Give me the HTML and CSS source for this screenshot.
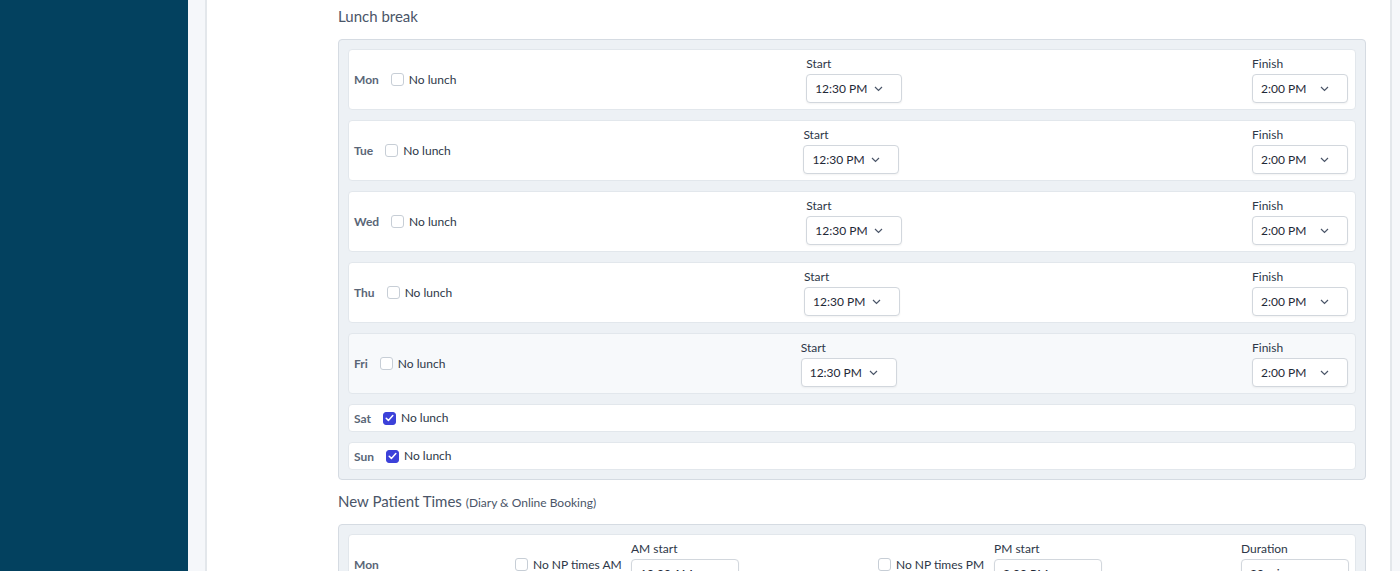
FILE: index.html
```html
<!DOCTYPE html>
<html lang="en">
<head>
    <meta charset="UTF-8">
    <meta name="viewport" content="width=device-width, initial-scale=1.0">
    <title>Practice hours</title>
    <link rel="stylesheet" href="styles.css">
</head>
<body>
    <div class="sidebar"></div>
    <div class="main">
        <div class="card">
            <h3 class="section-title">Lunch break</h3>
            <div class="panel">
                <div class="row">
                    <div class="day">
                        <span class="day-name">Mon</span>
                        <label class="check"><span class="box"></span>No lunch</label>
                    </div>
                    <div class="field">
                        <div class="field-label">Start</div>
                        <div class="select">12:30 PM<svg width="9" height="6" viewBox="0 0 9 6"><path d="M1 1l3.5 3.5L8 1" fill="none" stroke="#4a5568" stroke-width="1.2"/></svg></div>
                    </div>
                    <div class="field">
                        <div class="field-label">Finish</div>
                        <div class="select">2:00 PM<svg width="9" height="6" viewBox="0 0 9 6"><path d="M1 1l3.5 3.5L8 1" fill="none" stroke="#4a5568" stroke-width="1.2"/></svg></div>
                    </div>
                </div>
                <div class="row">
                    <div class="day">
                        <span class="day-name">Tue</span>
                        <label class="check"><span class="box"></span>No lunch</label>
                    </div>
                    <div class="field">
                        <div class="field-label">Start</div>
                        <div class="select">12:30 PM<svg width="9" height="6" viewBox="0 0 9 6"><path d="M1 1l3.5 3.5L8 1" fill="none" stroke="#4a5568" stroke-width="1.2"/></svg></div>
                    </div>
                    <div class="field">
                        <div class="field-label">Finish</div>
                        <div class="select">2:00 PM<svg width="9" height="6" viewBox="0 0 9 6"><path d="M1 1l3.5 3.5L8 1" fill="none" stroke="#4a5568" stroke-width="1.2"/></svg></div>
                    </div>
                </div>
                <div class="row">
                    <div class="day">
                        <span class="day-name">Wed</span>
                        <label class="check"><span class="box"></span>No lunch</label>
                    </div>
                    <div class="field">
                        <div class="field-label">Start</div>
                        <div class="select">12:30 PM<svg width="9" height="6" viewBox="0 0 9 6"><path d="M1 1l3.5 3.5L8 1" fill="none" stroke="#4a5568" stroke-width="1.2"/></svg></div>
                    </div>
                    <div class="field">
                        <div class="field-label">Finish</div>
                        <div class="select">2:00 PM<svg width="9" height="6" viewBox="0 0 9 6"><path d="M1 1l3.5 3.5L8 1" fill="none" stroke="#4a5568" stroke-width="1.2"/></svg></div>
                    </div>
                </div>
                <div class="row">
                    <div class="day">
                        <span class="day-name">Thu</span>
                        <label class="check"><span class="box"></span>No lunch</label>
                    </div>
                    <div class="field">
                        <div class="field-label">Start</div>
                        <div class="select">12:30 PM<svg width="9" height="6" viewBox="0 0 9 6"><path d="M1 1l3.5 3.5L8 1" fill="none" stroke="#4a5568" stroke-width="1.2"/></svg></div>
                    </div>
                    <div class="field">
                        <div class="field-label">Finish</div>
                        <div class="select">2:00 PM<svg width="9" height="6" viewBox="0 0 9 6"><path d="M1 1l3.5 3.5L8 1" fill="none" stroke="#4a5568" stroke-width="1.2"/></svg></div>
                    </div>
                </div>
                <div class="row hover">
                    <div class="day">
                        <span class="day-name">Fri</span>
                        <label class="check"><span class="box"></span>No lunch</label>
                    </div>
                    <div class="field">
                        <div class="field-label">Start</div>
                        <div class="select">12:30 PM<svg width="9" height="6" viewBox="0 0 9 6"><path d="M1 1l3.5 3.5L8 1" fill="none" stroke="#4a5568" stroke-width="1.2"/></svg></div>
                    </div>
                    <div class="field">
                        <div class="field-label">Finish</div>
                        <div class="select">2:00 PM<svg width="9" height="6" viewBox="0 0 9 6"><path d="M1 1l3.5 3.5L8 1" fill="none" stroke="#4a5568" stroke-width="1.2"/></svg></div>
                    </div>
                </div>
                <div class="row short">
                    <div class="day">
                        <span class="day-name">Sat</span>
                        <label class="check"><span class="box checked"><svg width="9" height="8" viewBox="0 0 9 8"><path d="M1.2 4.2l2.2 2.2L7.8 1.6" fill="none" stroke="#fff" stroke-width="1.5" stroke-linecap="round" stroke-linejoin="round"/></svg></span>No lunch</label>
                    </div>
                </div>
                <div class="row short">
                    <div class="day">
                        <span class="day-name">Sun</span>
                        <label class="check"><span class="box checked"><svg width="9" height="8" viewBox="0 0 9 8"><path d="M1.2 4.2l2.2 2.2L7.8 1.6" fill="none" stroke="#fff" stroke-width="1.5" stroke-linecap="round" stroke-linejoin="round"/></svg></span>No lunch</label>
                    </div>
                </div>
            </div>

            <h3 class="section-title np-title">New Patient Times <small>(Diary &amp; Online Booking)</small></h3>
            <div class="panel">
                <div class="row np-row">
                    <span class="day-name">Mon</span>
                    <label class="check"><span class="box"></span>No NP times AM</label>
                    <div class="field">
                        <div class="field-label">AM start</div>
                        <div class="select wide">10:00 AM<svg width="9" height="6" viewBox="0 0 9 6"><path d="M1 1l3.5 3.5L8 1" fill="none" stroke="#4a5568" stroke-width="1.2"/></svg></div>
                    </div>
                    <label class="check"><span class="box"></span>No NP times PM</label>
                    <div class="field">
                        <div class="field-label">PM start</div>
                        <div class="select wide">2:00 PM<svg width="9" height="6" viewBox="0 0 9 6"><path d="M1 1l3.5 3.5L8 1" fill="none" stroke="#4a5568" stroke-width="1.2"/></svg></div>
                    </div>
                    <div class="field">
                        <div class="field-label">Duration</div>
                        <div class="select wide duration">30 mins<svg width="9" height="6" viewBox="0 0 9 6"><path d="M1 1l3.5 3.5L8 1" fill="none" stroke="#3c41d9" stroke-width="1.2"/></svg></div>
                    </div>
                </div>
            </div>
        </div>
    </div>
</body>
</html>
```

FILE: styles.css
```css
html, body {
    margin: 0;
    height: 571px;
    overflow: hidden;
}
body {
    display: flex;
    font-family: Lato, "Open Sans", "Liberation Sans", sans-serif;
    color: #4a5568;
    background: #f5f7fa;
}
.sidebar {
    width: 188px;
    flex-shrink: 0;
    background: #03415f;
}
.main {
    flex: 1;
    padding: 0 8px 0 17px;
}
.card {
    height: 100%;
    background: #fff;
    border-left: 2px solid #e3e7eb;
    border-right: 2px solid #e3e7eb;
    padding: 6px 24px 0 131px;
}
.section-title {
    margin: 0 0 13px;
    font-size: 15px;
    line-height: 20px;
    height: 20px;
    font-weight: 400;
    color: #4a5568;
}
.section-title small {
    font-size: 12px;
    line-height: 1;
}
.np-title {
    margin-top: 11px;
}
.panel {
    background: #edf1f5;
    border: 1px solid #d5dbe2;
    border-radius: 4px;
    padding: 9px;
    display: flex;
    flex-direction: column;
    gap: 10px;
}
.row {
    background: #fff;
    border: 1px solid #e2e7ec;
    border-radius: 4px;
    padding: 6px 7px 6px 5px;
    display: flex;
    justify-content: space-between;
    align-items: center;
}
.row.hover {
    background: #f7f9fb;
}
.row.short {
    padding: 5px 5px;
    height: 16px;
}
.day {
    display: flex;
    align-items: center;
    gap: 12px;
}
.day-name {
    font-size: 12px;
    font-weight: 700;
    color: #5a6677;
}
.check {
    display: flex;
    align-items: center;
    gap: 5px;
    font-size: 12px;
    line-height: 16px;
    color: #2d3748;
}
.box {
    width: 11px;
    height: 11px;
    border: 1px solid #c7ced6;
    border-radius: 3px;
    background: #fff;
    display: flex;
    align-items: center;
    justify-content: center;
}
.box.checked {
    background: #3c41d9;
    border-color: #3c41d9;
}
.field-label {
    font-size: 12px;
    line-height: 16px;
    margin-bottom: 2px;
    color: #2d3748;
}
.select {
    box-sizing: border-box;
    width: 96px;
    height: 29px;
    border: 1px solid #d2d7dd;
    border-radius: 4px;
    box-shadow: 0 1px 2px rgba(0, 0, 0, 0.05);
    background: #fff;
    display: flex;
    align-items: center;
    padding: 0 0 0 8px;
    font-size: 12px;
    color: #1f2937;
}
.select svg {
    margin-left: auto;
    margin-right: 18px;
}
.select.wide {
    width: 108px;
}
.np-row {
    display: grid;
    grid-template-columns: 161px 116px 1fr 116px 1fr 107px;
    align-items: center;
}
```
